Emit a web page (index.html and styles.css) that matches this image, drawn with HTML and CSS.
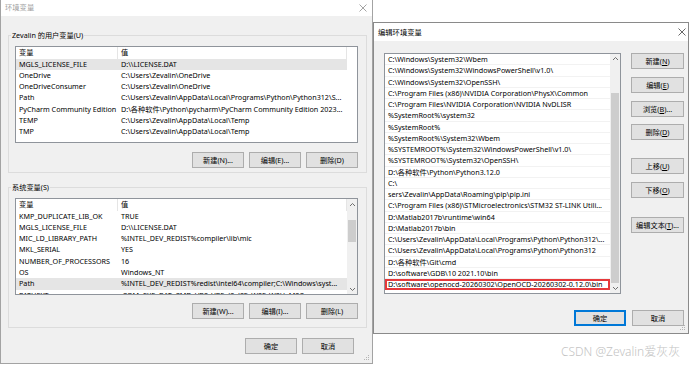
FILE: index.html
```html
<!DOCTYPE html>
<html lang="zh-CN">
<head>
<meta charset="UTF-8" />
<meta name="viewport" content="width=device-width, initial-scale=1" />
<title>环境变量</title>
<link rel="stylesheet" href="styles.css">
</head>
<body>

<div class="win env">
  <div class="titlebar">
    <span class="title">环境变量</span>
    <svg class="close" width="8" height="8" viewBox="0 0 8 8"><path d="M0.5 0.5 L7.5 7.5 M7.5 0.5 L0.5 7.5" /></svg>
  </div>
  <div class="body">
    <fieldset class="group user">
      <legend>Zevalin 的用户变量(U)</legend>
      <div class="list vars">
        <div class="rows">
          <div class="row head"><span class="k">变量</span><span class="v">值</span></div>
          <div class="row sel"><span class="k">MGLS_LICENSE_FILE</span><span class="v">D:\\LICENSE.DAT</span></div>
          <div class="row"><span class="k">OneDrive</span><span class="v">C:\Users\Zevalin\OneDrive</span></div>
          <div class="row"><span class="k">OneDriveConsumer</span><span class="v">C:\Users\Zevalin\OneDrive</span></div>
          <div class="row"><span class="k">Path</span><span class="v">C:\Users\Zevalin\AppData\Local\Programs\Python\Python312\S...</span></div>
          <div class="row"><span class="k">PyCharm Community Edition</span><span class="v">D:\各种软件\Python\pycharm\PyCharm Community Edition 2023...</span></div>
          <div class="row"><span class="k">TEMP</span><span class="v">C:\Users\Zevalin\AppData\Local\Temp</span></div>
          <div class="row"><span class="k">TMP</span><span class="v">C:\Users\Zevalin\AppData\Local\Temp</span></div>
        </div>
        <div class="sb blank"></div>
      </div>
      <div class="btns">
        <button>新建(N)...</button>
        <button>编辑(E)...</button>
        <button>删除(D)</button>
      </div>
    </fieldset>

    <fieldset class="group sys">
      <legend>系统变量(S)</legend>
      <div class="list vars">
        <div class="rows">
          <div class="row head"><span class="k">变量</span><span class="v">值</span></div>
          <div class="row"><span class="k">KMP_DUPLICATE_LIB_OK</span><span class="v">TRUE</span></div>
          <div class="row"><span class="k">MGLS_LICENSE_FILE</span><span class="v">D:\\LICENSE.DAT</span></div>
          <div class="row"><span class="k">MIC_LD_LIBRARY_PATH</span><span class="v">%INTEL_DEV_REDIST%compiler\lib\mic</span></div>
          <div class="row"><span class="k">MKL_SERIAL</span><span class="v">YES</span></div>
          <div class="row"><span class="k">NUMBER_OF_PROCESSORS</span><span class="v">16</span></div>
          <div class="row"><span class="k">OS</span><span class="v">Windows_NT</span></div>
          <div class="row sel"><span class="k">Path</span><span class="v">%INTEL_DEV_REDIST%redist\intel64\compiler;C:\Windows\syst...</span></div>
          <div class="row"><span class="k">PATHEXT</span><span class="v">.COM;.EXE;.BAT;.CMD;.VBS;.VBE;.JS;.JSE;.WSF;.WSH;.MSC</span></div>
        </div>
        <div class="sb">
          <div class="arrow"><svg width="7" height="5" viewBox="0 0 7 5"><polyline points="1,4 3.5,1.5 6,4" /></svg></div>
          <div class="thumb sys-thumb"></div>
          <div class="arrow down"><svg width="7" height="5" viewBox="0 0 7 5"><polyline points="1,1 3.5,3.5 6,1" /></svg></div>
        </div>
      </div>
      <div class="btns">
        <button>新建(W)...</button>
        <button>编辑(I)...</button>
        <button>删除(L)</button>
      </div>
    </fieldset>

    <div class="footer">
      <button>确定</button>
      <button>取消</button>
    </div>
  </div>
  <svg class="grip" width="6" height="6" viewBox="0 0 6 6"><rect x="4" y="0" width="1" height="1"/><rect x="2" y="2" width="1" height="1"/><rect x="4" y="2" width="1" height="1"/><rect x="0" y="4" width="1" height="1"/><rect x="2" y="4" width="1" height="1"/><rect x="4" y="4" width="1" height="1"/></svg>
</div>

<div class="win edit">
  <div class="titlebar">
    <span class="title">编辑环境变量</span>
    <svg class="close" width="8" height="8" viewBox="0 0 8 8"><path d="M0.5 0.5 L7.5 7.5 M7.5 0.5 L0.5 7.5" /></svg>
  </div>
  <div class="body">
    <div class="main">
      <div class="list paths">
        <div class="rows">
          <div class="row">C:\Windows\System32\Wbem</div>
          <div class="row">C:\Windows\System32\WindowsPowerShell\v1.0\</div>
          <div class="row">C:\Windows\System32\OpenSSH\</div>
          <div class="row">C:\Program Files (x86)\NVIDIA Corporation\PhysX\Common</div>
          <div class="row">C:\Program Files\NVIDIA Corporation\NVIDIA NvDLISR</div>
          <div class="row">%SystemRoot%\system32</div>
          <div class="row">%SystemRoot%</div>
          <div class="row">%SystemRoot%\System32\Wbem</div>
          <div class="row">%SYSTEMROOT%\System32\WindowsPowerShell\v1.0\</div>
          <div class="row">%SYSTEMROOT%\System32\OpenSSH\</div>
          <div class="row">D:\各种软件\Python\Python3.12.0</div>
          <div class="row">C:\</div>
          <div class="row">sers\Zevalin\AppData\Roaming\pip\pip.ini</div>
          <div class="row">C:\Program Files (x86)\STMicroelectronics\STM32 ST-LINK Utili...</div>
          <div class="row">D:\Matlab2017b\runtime\win64</div>
          <div class="row">D:\Matlab2017b\bin</div>
          <div class="row">C:\Users\Zevalin\AppData\Local\Programs\Python\Python312\...</div>
          <div class="row">C:\Users\Zevalin\AppData\Local\Programs\Python\Python312</div>
          <div class="row">D:\各种软件\Git\cmd</div>
          <div class="row">D:\software\GDB\10 2021.10\bin</div>
          <div class="row mark">D:\software\openocd-20260302\OpenOCD-20260302-0.12.0\bin</div>
        </div>
        <div class="sb">
          <div class="arrow"><svg width="7" height="5" viewBox="0 0 7 5"><polyline points="1,4 3.5,1.5 6,4" /></svg></div>
          <div class="thumb path-thumb"></div>
          <div class="arrow down"><svg width="7" height="5" viewBox="0 0 7 5"><polyline points="1,1 3.5,3.5 6,1" /></svg></div>
        </div>
      </div>
      <div class="side">
        <button>新建(<u>N</u>)</button>
        <button>编辑(<u>E</u>)</button>
        <button>浏览(<u>B</u>)...</button>
        <button class="b-del">删除(<u>D</u>)</button>
        <button class="b-up">上移(<u>U</u>)</button>
        <button>下移(<u>O</u>)</button>
        <button class="b-text">编辑文本(<u>T</u>)...</button>
      </div>
    </div>
    <div class="footer">
      <button class="default">确定</button>
      <button>取消</button>
    </div>
  </div>
  <svg class="grip" width="6" height="6" viewBox="0 0 6 6"><rect x="4" y="0" width="1" height="1"/><rect x="2" y="2" width="1" height="1"/><rect x="4" y="2" width="1" height="1"/><rect x="0" y="4" width="1" height="1"/><rect x="2" y="4" width="1" height="1"/><rect x="4" y="4" width="1" height="1"/></svg>
</div>

<div class="watermark">CSDN @Zevalin爱灰灰</div>

</body>
</html>
```

FILE: styles.css
```css
* { box-sizing: border-box; }
html, body { margin: 0; padding: 0; }
body { position: relative; width: 691px; height: 365px; overflow: hidden; background: #fff; color: #000;
  font-family: "Noto Sans", "Noto Sans CJK SC", sans-serif; font-size: 7.2px; line-height: 11px; }

/* windows */
.win { position: absolute; background: #f0f0f0; }
.env { left: 0; top: 0; width: 373px; height: 364px; border: 1px solid #a3a3a3; border-top: 0; }
.edit { left: 373px; top: 22px; width: 316px; height: 312px; border: 1px solid #8a8a8a; }

.titlebar { display: flex; align-items: center; justify-content: space-between; background: #fff; }
.env .titlebar { height: 16px; padding: 0 5px 1px 4px; }
.edit .titlebar { height: 18px; padding: 0 2px 0 4px; }
.title { font-size: 7.3px; }
.env .title { color: #a0a0a0; }
.close path { stroke: #9a9a9a; stroke-width: 0.9; fill: none; }
.edit .close path { stroke: #555; }

.grip { position: absolute; right: 2px; bottom: 2px; fill: #b4b4b4; }

/* group boxes */
.env .body { padding: 14px 5px 0 7px; }
.group { margin: 0; padding: 5px 8px 4px 6px; border: 1px solid #dcdcdc; min-width: 0; }
.group legend { margin-left: -4px; padding: 0 1px; line-height: 11px; }
.group.sys { margin-top: 9px; padding-bottom: 8px; }

/* lists */
.list { display: flex; background: #fff; border: 1px solid #8f949b; overflow: hidden; }
.rows { flex: 1; overflow: hidden; }
.row { white-space: nowrap; overflow: hidden; }
.sb { width: 10px; display: flex; flex-direction: column; background: #f0f0f0; }
.sb.blank { background: #fff; }
.arrow { height: 10px; display: flex; align-items: center; justify-content: center; }
.arrow.down { margin-top: auto; }
.arrow polyline { fill: none; stroke: #606060; stroke-width: 0.9; }
.thumb { width: 8px; margin: 0 auto; background: #cdcdcd; }
.sys-thumb { margin-top: 11px; height: 22px; }
.path-thumb { margin-top: 29px; height: 192px; }

.vars { height: 97px; }
.vars .row { display: flex; height: 11.3px; line-height: 11.3px; }
.vars .row.head { height: 11.6px; }
.vars .k { width: 102px; flex: none; padding-left: 3px; overflow: hidden; }
.vars .v { width: 229px; flex: none; padding-left: 3px; overflow: hidden; }
.vars .head .k, .vars .head .v { border-right: 1px solid #e5e5e5; }
.vars .sel { background: #e5e5e5; }

.btns { display: flex; justify-content: flex-end; gap: 5px; margin-top: 9px; }
.sys .btns { margin-top: 8px; }

button { font: inherit; color: #000; height: 16px; padding: 0; background: #e1e1e1; border: 1px solid #adadad; border-radius: 0; line-height: 13px; }
.btns button, .footer button { width: 52px; }

.env .footer { display: flex; justify-content: flex-end; gap: 5px; margin-top: 10px; padding-right: 13px; }

/* edit window */
.edit .body { padding: 12px 4px 0 10px; }
.main { display: flex; gap: 10px; }
.paths { width: 237px; height: 241px; }
.paths .row { height: 11.25px; line-height: 10.6px; padding-left: 3px; border-bottom: 1px solid #f2f2f2; }
.paths .row.mark { outline: 2px solid #e6393b; outline-offset: -2px; border-bottom: 0; }
.side { display: flex; flex-direction: column; gap: 8px; width: 53px; }
.side button { width: 53px; height: 16px; }
.side .b-del { margin-top: -1px; }
.side .b-up { margin-top: 10px; }
.side .b-text { margin-top: 11px; }
.edit .footer { display: flex; justify-content: flex-end; gap: 6px; margin-top: 16px; }
.edit .footer button { width: 52px; }
button.default { border-color: #0078d7; box-shadow: inset 0 0 0 1px #0078d7; }

.watermark { position: absolute; left: 561px; top: 344px; white-space: nowrap; font-size: 12px; line-height: 16px; color: #c3c3c3; font-weight: 300; }
```
